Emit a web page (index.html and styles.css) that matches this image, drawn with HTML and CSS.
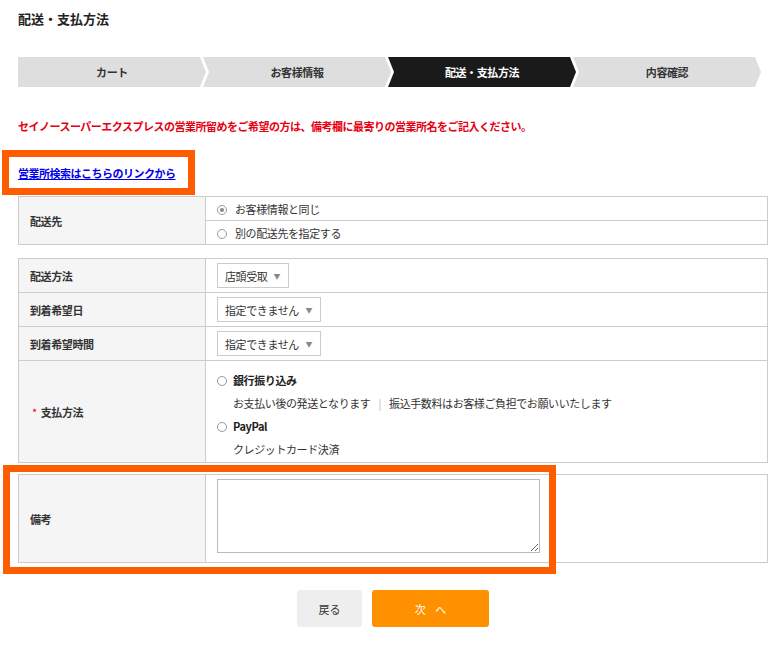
FILE: index.html
```html
<!DOCTYPE html>
<html lang="ja">
<head>
<meta charset="utf-8">
<title>配送・支払方法</title>
<link rel="stylesheet" href="styles.css">
</head>
<body>
<div class="page">
  <h1 class="title">配送・支払方法</h1>

  <ol class="steps">
    <li class="step step-first">カート</li>
    <li class="step">お客様情報</li>
    <li class="step step-active">配送・支払方法</li>
    <li class="step">内容確認</li>
  </ol>

  <p class="notice">セイノースーパーエクスプレスの営業所留めをご希望の方は、備考欄に最寄りの営業所名をご記入ください。</p>

  <div class="link-box">
    <a class="office-link" href="#">営業所検索はこちらのリンクから</a>
  </div>

  <table class="form-table">
    <tr>
      <th rowspan="2" class="label h-row">配送先</th>
      <td class="value h-row"><span class="radio radio-on"></span>お客様情報と同じ</td>
    </tr>
    <tr>
      <td class="value h-row"><span class="radio"></span>別の配送先を指定する</td>
    </tr>
  </table>

  <table class="form-table table-gap">
    <tr>
      <th class="label h-sel">配送方法</th>
      <td class="value h-sel"><span class="select select-short">店頭受取<span class="caret">▼</span></span></td>
    </tr>
    <tr>
      <th class="label h-sel">到着希望日</th>
      <td class="value h-sel"><span class="select select-long">指定できません<span class="caret">▼</span></span></td>
    </tr>
    <tr>
      <th class="label h-sel">到着希望時間</th>
      <td class="value h-sel"><span class="select select-long">指定できません<span class="caret">▼</span></span></td>
    </tr>
    <tr>
      <th class="label h-pay"><span class="req">*</span>支払方法</th>
      <td class="value h-pay pay-cell">
        <div class="pay-list">
          <div class="pay-line"><span class="radio radio-pay"></span><b>銀行振り込み</b></div>
          <div class="pay-line pay-desc">お支払い後の発送となります<span class="sep">|</span>振込手数料はお客様ご負担でお願いいたします</div>
          <div class="pay-line"><span class="radio radio-pay"></span><b>PayPal</b></div>
          <div class="pay-line pay-desc">クレジットカード決済</div>
        </div>
      </td>
    </tr>
  </table>

  <div class="remark-wrap">
    <table class="form-table">
      <tr>
        <th class="label h-remark">備考</th>
        <td class="value h-remark remark-cell"><textarea class="remark"></textarea></td>
      </tr>
    </table>
    <div class="remark-box"></div>
  </div>

  <div class="actions">
    <button class="btn btn-back" type="button">戻る</button>
    <button class="btn btn-next" type="button">次 へ</button>
  </div>
</div>
</body>
</html>
```

FILE: styles.css
```css
* { box-sizing: border-box; }

html, body {
  margin: 0;
  padding: 0;
  background: #fff;
}

body {
  font-family: "Noto Sans CJK JP", "Noto Sans", sans-serif;
  font-size: 11px;
  letter-spacing: -0.4px;
  color: #333;
}

.page {
  padding: 10px 10px 0 18px;
}

.title {
  margin: 0;
  font-size: 13px;
  line-height: 18px;
  font-weight: bold;
  letter-spacing: 0;
  color: #222;
}

/* stepper */
.steps {
  display: flex;
  list-style: none;
  margin: 29px 0 0;
  padding: 0;
  width: 742px;
}

.step {
  flex: 0 0 188px;
  height: 30px;
  line-height: 30px;
  margin-left: -3px;
  text-align: center;
  font-weight: bold;
  font-size: 11px;
  color: #333;
  background: #dedede;
  clip-path: polygon(0 0, calc(100% - 6px) 0, 100% 50%, calc(100% - 6px) 100%, 0 100%, 6px 50%);
}

.step-first {
  margin-left: 0;
  clip-path: polygon(0 0, calc(100% - 6px) 0, 100% 50%, calc(100% - 6px) 100%, 0 100%);
}

.step-active {
  background: #1a1a1a;
  color: #fff;
}

.notice {
  margin: 30px 0 0;
  line-height: 18px;
  font-size: 11px;
  font-weight: bold;
  letter-spacing: -0.5px;
  color: #e60012;
}

/* link box annotation */
.link-box {
  margin: 15px 0 0 -16px;
  width: 193px;
  height: 45px;
  border: 7px solid #ff5c00;
  padding-left: 9px;
  display: flex;
  align-items: center;
  background: #fff;
}

.office-link {
  color: #0000ee;
  text-decoration: underline;
  font-weight: bold;
  font-size: 11px;
  letter-spacing: -0.5px;
}

/* tables */
.form-table {
  width: 750px;
  border-collapse: collapse;
  margin-top: 1px;
}

.table-gap {
  margin-top: 13px;
}

.form-table th,
.form-table td {
  border: 1px solid #ccc;
  padding: 0;
}

.label {
  width: 187px;
  background: #f5f5f5;
  text-align: left;
  font-weight: bold;
  padding-left: 11px !important;
  color: #333;
  vertical-align: middle;
}

.value {
  padding-left: 11px !important;
  vertical-align: middle;
  color: #333;
}

.h-row { height: 24px; }
.h-sel { height: 34px; }
.h-pay { height: 102px; }
.h-remark { height: 88px; }

.radio {
  display: inline-block;
  width: 10px;
  height: 10px;
  border: 1px solid #999;
  border-radius: 50%;
  background: #fff;
  vertical-align: -1px;
  margin-right: 8px;
  position: relative;
}

.radio-pay {
  margin-right: 6px;
}

.radio-on::after {
  content: "";
  position: absolute;
  left: 2px;
  top: 2px;
  width: 4px;
  height: 4px;
  border-radius: 50%;
  background: #888;
}

.select {
  display: inline-flex;
  align-items: center;
  justify-content: space-between;
  height: 25px;
  border: 1px solid #ccc;
  background: #fff;
  padding: 0 8px 0 7px;
  color: #333;
}

.select-short { width: 72px; }
.select-long { width: 104px; }

.caret {
  font-size: 7px;
  color: #888;
}

.req {
  color: #e60012;
  margin: 0 4px 0 2px;
  font-weight: normal;
}

.pay-cell {
  vertical-align: top;
}

.pay-list {
  padding-top: 8px;
  display: flex;
  flex-direction: column;
}

.pay-line {
  line-height: 23px;
  height: 23px;
  white-space: nowrap;
}

.pay-line b {
  font-weight: bold;
  color: #222;
}

.pay-desc {
  padding-left: 16px;
}

.sep {
  color: #bbb;
  margin: 0 8px;
}

/* remark */
.remark-wrap {
  position: relative;
  margin-top: 11px;
}

.remark-wrap .form-table { margin-top: 0; }

.remark-cell {
  vertical-align: top;
  padding-top: 4px !important;
}

.remark {
  display: block;
  width: 323px;
  height: 74px;
  border: 1px solid #bbb;
  margin: 0;
  padding: 4px;
  font-family: inherit;
  font-size: 11px;
}

.remark-box {
  position: absolute;
  left: -15px;
  top: -9px;
  width: 553px;
  height: 109px;
  border: 7px solid #ff5c00;
  pointer-events: none;
}

/* buttons */
.actions {
  display: flex;
  justify-content: center;
  gap: 10px;
  margin-top: 27px;
  width: 750px;
}

.btn {
  height: 37px;
  border: none;
  border-radius: 3px;
  font-family: inherit;
  font-size: 11px;
  cursor: pointer;
}

.btn-back {
  width: 65px;
  background: #eee;
  color: #333;
}

.btn-next {
  width: 117px;
  background: #ff9100;
  color: #fff;
  word-spacing: 7px;
}
```
